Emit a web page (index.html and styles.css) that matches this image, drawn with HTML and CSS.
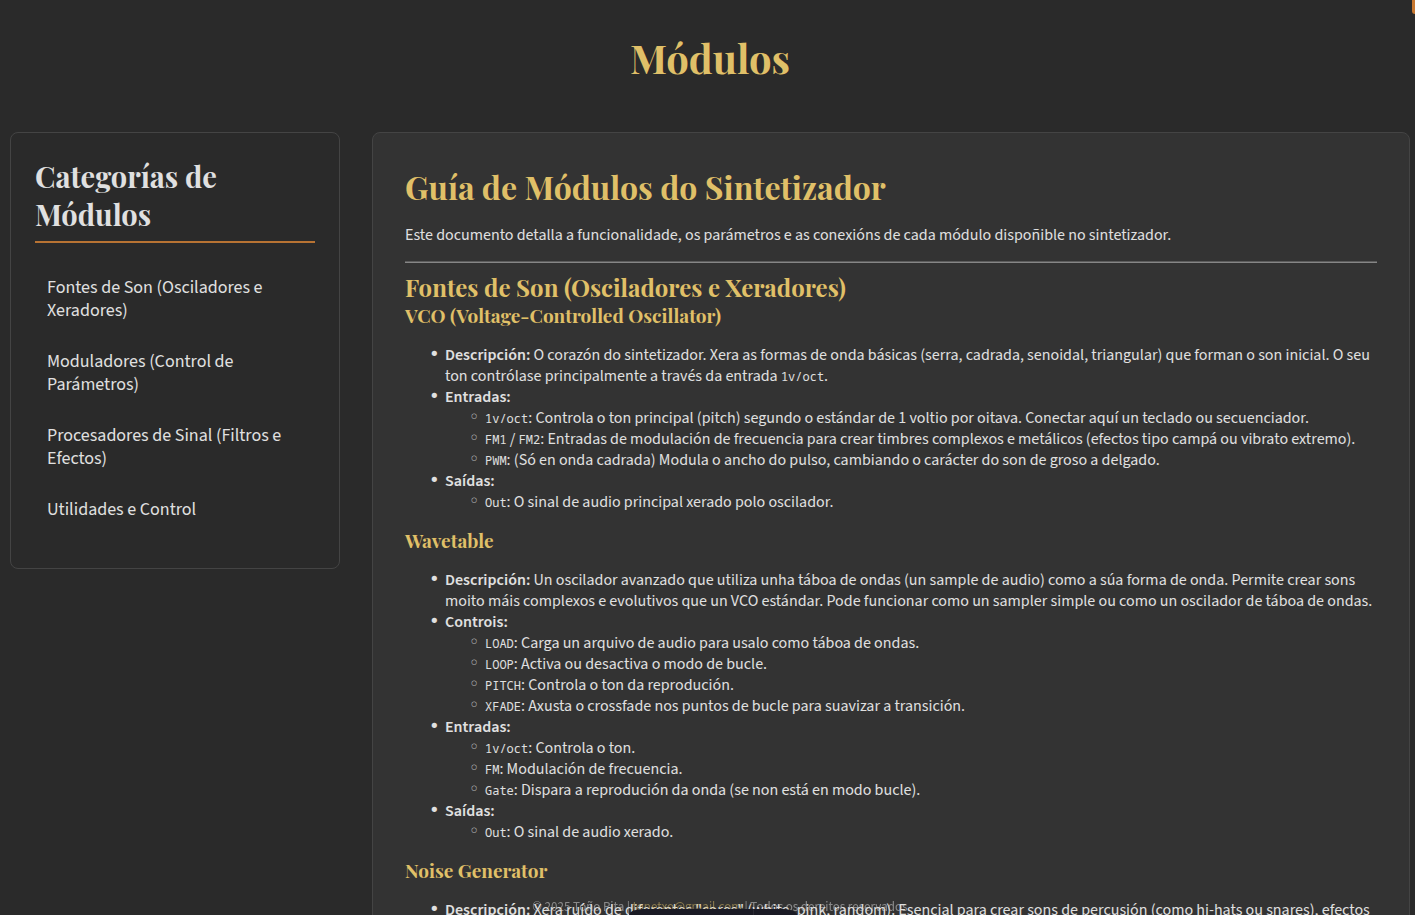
FILE: index.html
```html
<!DOCTYPE html>
<html lang="gl">
<head>
<meta charset="utf-8">
<title>Módulos</title>
<link rel="stylesheet" href="styles.css">
</head>
<body>
<a class="skip-link" href="#guia" aria-label="Ir ao contido"></a>
<header class="page-header"><h1 class="page-title">Módulos</h1></header>
<div class="layout">
  <nav class="sidebar" aria-labelledby="categorias">
    <h2 class="sidebar-title" id="categorias">Categorías de Módulos</h2>
    <ul class="category-list">
      <li><a class="category" href="#fontes">Fontes de Son (Osciladores e Xeradores)</a></li>
      <li><a class="category" href="#moduladores">Moduladores (Control de Parámetros)</a></li>
      <li><a class="category" href="#procesadores">Procesadores de Sinal (Filtros e Efectos)</a></li>
      <li><a class="category" href="#utilidades">Utilidades e Control</a></li>
    </ul>
  </nav>
  <main class="guide" id="guia">
    <h1>Guía de Módulos do Sintetizador</h1>
    <p>Este documento detalla a funcionalidade, os parámetros e as conexións de cada módulo dispoñible no sintetizador.</p>
    <hr>
    <h2 id="fontes">Fontes de Son (Osciladores e Xeradores)</h2>
    <h3>VCO (Voltage-Controlled Oscillator)</h3>
    <ul>
      <li><strong>Descripción:</strong> O corazón do sintetizador. Xera as formas de onda básicas (serra, cadrada, senoidal, triangular) que forman o son inicial. O seu ton contrólase principalmente a través da entrada <code>1v/oct</code>.</li>
      <li><strong>Entradas:</strong>
        <ul>
          <li><code>1v/oct</code>: Controla o ton principal (pitch) segundo o estándar de 1 voltio por oitava. Conectar aquí un teclado ou secuenciador.</li>
          <li><code>FM1</code> / <code>FM2</code>: Entradas de modulación de frecuencia para crear timbres complexos e metálicos (efectos tipo campá ou vibrato extremo).</li>
          <li><code>PWM</code>: (Só en onda cadrada) Modula o ancho do pulso, cambiando o carácter do son de groso a delgado.</li>
        </ul>
      </li>
      <li><strong>Saídas:</strong>
        <ul>
          <li><code>Out</code>: O sinal de audio principal xerado polo oscilador.</li>
        </ul>
      </li>
    </ul>
    <h3>Wavetable</h3>
    <ul>
      <li><strong>Descripción:</strong> Un oscilador avanzado que utiliza unha táboa de ondas (un sample de audio) como a súa forma de onda. Permite crear sons moito máis complexos e evolutivos que un VCO estándar. Pode funcionar como un sampler simple ou como un oscilador de táboa de ondas.</li>
      <li><strong>Controis:</strong>
        <ul>
          <li><code>LOAD</code>: Carga un arquivo de audio para usalo como táboa de ondas.</li>
          <li><code>LOOP</code>: Activa ou desactiva o modo de bucle.</li>
          <li><code>PITCH</code>: Controla o ton da reprodución.</li>
          <li><code>XFADE</code>: Axusta o crossfade nos puntos de bucle para suavizar a transición.</li>
        </ul>
      </li>
      <li><strong>Entradas:</strong>
        <ul>
          <li><code>1v/oct</code>: Controla o ton.</li>
          <li><code>FM</code>: Modulación de frecuencia.</li>
          <li><code>Gate</code>: Dispara a reprodución da onda (se non está en modo bucle).</li>
        </ul>
      </li>
      <li><strong>Saídas:</strong>
        <ul>
          <li><code>Out</code>: O sinal de audio xerado.</li>
        </ul>
      </li>
    </ul>
    <h3>Noise Generator</h3>
    <ul>
      <li><strong>Descripción:</strong> Xera ruído de diferentes "cores" (white, pink, random). Esencial para crear sons de percusión (como hi-hats ou snares), efectos</li>
    </ul>
  </main>
</div>
<footer class="page-footer">© 2025 Toño Pita | <a href="mailto:tonetxo@gmail.com">tonetxo@gmail.com</a> | Todos os dereitos reservados.</footer>
<div class="dock"></div>
</body>
</html>
```
FILE: styles.css
```css
:root {
  --bg: #2a2a2a;
  --panel: #333333;
  --line: #444444;
  --text: #e0e0e0;
  --gold: #e0c068;
  --copper: #b87333;
  --serif: "Playfair Display", "Liberation Serif", serif;
  --sans: "Source Sans Pro", "Source Sans 3", "Noto Sans CJK JP", sans-serif;
}

* { box-sizing: border-box; }

body {
  margin: 0;
  height: 100vh;
  overflow: hidden;
  background: var(--bg);
  color: var(--text);
  font: 16px/21px var(--sans);
}

h1, h2, h3 {
  margin: 0;
  font-family: var(--serif);
  font-weight: 700;
}

strong { font-weight: 600; }

.page-header {
  padding: 32px 5px 48px 10px;
  text-align: center;
}

.page-title {
  color: var(--gold);
  font-size: 40px;
  line-height: 52px;
}

.layout {
  display: grid;
  grid-template-columns: 330px 1fr;
  align-items: start;
  gap: 32px;
  padding: 0 5px 0 10px;
}

.sidebar {
  padding: 24px;
  border: 1px solid var(--line);
  border-radius: 8px;
}

.sidebar-title {
  margin-bottom: 24px;
  padding-bottom: 8px;
  border-bottom: 2px solid var(--copper);
  font-size: 29px;
  line-height: 38px;
}

.category-list {
  display: grid;
  gap: 10px;
  margin: 0;
  padding: 0 0 14px;
  list-style: none;
}

.category {
  display: block;
  padding: 9px 12px;
  color: var(--text);
  font-size: 18px;
  line-height: 23px;
  text-decoration: none;
}

.guide {
  padding: 32px;
  border: 1px solid var(--line);
  border-radius: 8px;
  background: var(--panel);
}

.guide h1,
.guide h2,
.guide h3 { color: var(--gold); }

.guide h1 { font-size: 32px; line-height: 43px; }
.guide h2 { font-size: 24px; line-height: 32px; }
.guide h3 { font-size: 19px; line-height: 25px; }

.guide p { margin: 17px 0 15px; }

.guide hr {
  margin: 8px 0;
  border: 0;
  border-top: 1px solid #5c5c5c;
  border-bottom: 1px solid #868686;
}

.guide ul {
  margin: 17px 0 15px;
  padding-left: 40px;
  list-style: none;
}

.guide ul ul { margin: 0; }

.guide li::before {
  content: "•";
  display: inline-block;
  width: 16px;
  margin-left: -16px;
  font-family: "DejaVu Sans", sans-serif;
  font-size: 18px;
  line-height: 1px;
}

.guide ul ul li::before {
  content: "◦";
  color: #b0b0b0;
}

.guide code {
  font-family: "Noto Sans Mono", "DejaVu Sans Mono", monospace;
  font-size: 12px;
  line-height: 12px;
}

.page-footer {
  position: fixed;
  right: 0;
  bottom: 0;
  left: 0;
  padding-left: 28px;
  height: 19px;
  font-size: 13px;
  line-height: 22px;
  text-align: center;
  opacity: 0.5;
}

.page-footer a {
  color: var(--gold);
  text-decoration: none;
}

.skip-link {
  position: fixed;
  top: 0;
  right: 0;
  width: 3px;
  height: 14px;
  border-radius: 0 0 0 4px;
  background: #c87830;
}

.dock {
  position: fixed;
  bottom: 0;
  left: 50%;
  width: 168px;
  height: 6px;
  margin-left: -79px;
  border-radius: 14px 14px 0 0 / 6px 6px 0 0;
  background: linear-gradient(90deg, transparent 124px, #2a2a34 124px, #2a2a34 125px, transparent 125px) #1a1a24;
}
```
